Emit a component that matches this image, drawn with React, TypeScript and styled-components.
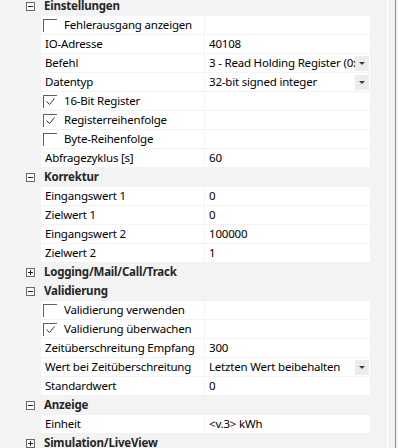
import styled, { createGlobalStyle } from 'styled-components';

const GlobalStyle = createGlobalStyle`
  html, body {
    margin: 0;
    padding: 0;
    background: #f3f3f3;
  }
  body {
    font-family: 'Noto Sans', 'Liberation Sans', sans-serif;
    font-size: 11.5px;
    letter-spacing: -0.2px;
    color: #000;
  }
`;

const Page = styled.div`
  display: flex;
  width: 398px;
  height: 448px;
  overflow: hidden;
  background: #f3f3f3;
`;

const Grid = styled.div`
  width: 369px;
  margin-top: -3px;
  display: flex;
  flex-direction: column;
  gap: 1px;
`;

const Gutter = styled.div`
  width: 18px;
`;

const PanelEdge = styled.div`
  width: 7px;
  border-left: 1px solid #ffffff;
  border-right: 1px solid #8c8c8c;
`;

const Row = styled.div`
  display: grid;
  grid-template-columns: 40px 163px 165px;
  column-gap: 1px;
  height: 18px;
`;

const HeaderRow = styled.div`
  display: grid;
  grid-template-columns: 40px 1fr;
  height: 18px;
  align-items: center;
`;

const ToggleCell = styled.div`
  display: flex;
  justify-content: flex-end;
  padding-right: 5px;
`;

const Toggle = styled.div<{ $open: boolean }>`
  width: 7px;
  height: 7px;
  border: 1px solid #6a6a6a;
  position: relative;
  background: #fff;

  &::before {
    content: '';
    position: absolute;
    left: 1px;
    right: 1px;
    top: 3px;
    height: 1px;
    background: #222;
  }

  &::after {
    content: '';
    position: absolute;
    top: 1px;
    bottom: 1px;
    left: 3px;
    width: 1px;
    background: #222;
    display: ${({ $open }) => ($open ? 'none' : 'block')};
  }
`;

const HeaderTitle = styled.div`
  font-weight: 700;
  color: #262626;
  padding-left: 4px;
  line-height: 18px;
  white-space: nowrap;
`;

const Cell = styled.div`
  background: #fff;
  display: flex;
  align-items: center;
  overflow: hidden;
  white-space: nowrap;
  line-height: 18px;
  padding-left: 4px;
`;

const ValueText = styled.span`
  flex: 1;
  overflow: hidden;
  min-width: 0;
`;

const DropButton = styled.div`
  width: 14px;
  height: 15px;
  margin-right: 1px;
  background: #ececec;
  display: flex;
  align-items: center;
  justify-content: center;
  flex-shrink: 0;
`;

const Arrow = styled.div`
  width: 0;
  height: 0;
  border-left: 3px solid transparent;
  border-right: 3px solid transparent;
  border-top: 3px solid #3c3c3c;
`;

const Check = styled.div`
  width: 13px;
  height: 12px;
  border-left: 1px solid #5f5f5f;
  border-top: 1px solid #5f5f5f;
  margin-left: -2px;
  margin-right: 7px;
  flex-shrink: 0;
  display: flex;
  align-items: center;
  justify-content: center;
`;

type Item = {
  label: string;
  value?: string;
  check?: boolean;
  dropdown?: boolean;
};

type Section = {
  title: string;
  open: boolean;
  items: Item[];
};

const sections: Section[] = [
  {
    title: 'Einstellungen',
    open: true,
    items: [
      { label: 'Fehlerausgang anzeigen', check: false },
      { label: 'IO-Adresse', value: '40108' },
      { label: 'Befehl', value: '3 - Read Holding Register (0x03)', dropdown: true },
      { label: 'Datentyp', value: '32-bit signed integer', dropdown: true },
      { label: '16-Bit Register', check: true },
      { label: 'Registerreihenfolge', check: true },
      { label: 'Byte-Reihenfolge', check: false },
      { label: 'Abfragezyklus [s]', value: '60' },
    ],
  },
  {
    title: 'Korrektur',
    open: true,
    items: [
      { label: 'Eingangswert 1', value: '0' },
      { label: 'Zielwert 1', value: '0' },
      { label: 'Eingangswert 2', value: '100000' },
      { label: 'Zielwert 2', value: '1' },
    ],
  },
  { title: 'Logging/Mail/Call/Track', open: false, items: [] },
  {
    title: 'Validierung',
    open: true,
    items: [
      { label: 'Validierung verwenden', check: false },
      { label: 'Validierung überwachen', check: true },
      { label: 'Zeitüberschreitung Empfang', value: '300' },
      { label: 'Wert bei Zeitüberschreitung', value: 'Letzten Wert beibehalten', dropdown: true },
      { label: 'Standardwert', value: '0' },
    ],
  },
  {
    title: 'Anzeige',
    open: true,
    items: [{ label: 'Einheit', value: '<v.3> kWh' }],
  },
  { title: 'Simulation/LiveView', open: false, items: [] },
];

const CheckBox = ({ checked }: { checked: boolean }) => (
  <Check>
    {checked && (
      <svg width="9" height="8" viewBox="0 0 9 8">
        <path d="M0.5 3.5 L3.5 6.5 L8.5 0.5" fill="none" stroke="#333" strokeWidth="1" />
      </svg>
    )}
  </Check>
);

const PropertyRow = ({ item }: { item: Item }) => (
  <Row>
    <span />
    <Cell>
      {item.check !== undefined && <CheckBox checked={item.check} />}
      {item.label}
    </Cell>
    <Cell>
      <ValueText>{item.value}</ValueText>
      {item.dropdown && (
        <DropButton>
          <Arrow />
        </DropButton>
      )}
    </Cell>
  </Row>
);

export default function App() {
  return (
    <>
      <GlobalStyle />
      <Page>
        <Grid>
          {sections.map((s) => (
            <div key={s.title} style={{ display: 'contents' }}>
              <HeaderRow>
                <ToggleCell>
                  <Toggle $open={s.open} />
                </ToggleCell>
                <HeaderTitle>{s.title}</HeaderTitle>
              </HeaderRow>
              {s.items.map((item) => (
                <PropertyRow key={item.label} item={item} />
              ))}
            </div>
          ))}
        </Grid>
        <Gutter />
        <PanelEdge />
      </Page>
    </>
  );
}
